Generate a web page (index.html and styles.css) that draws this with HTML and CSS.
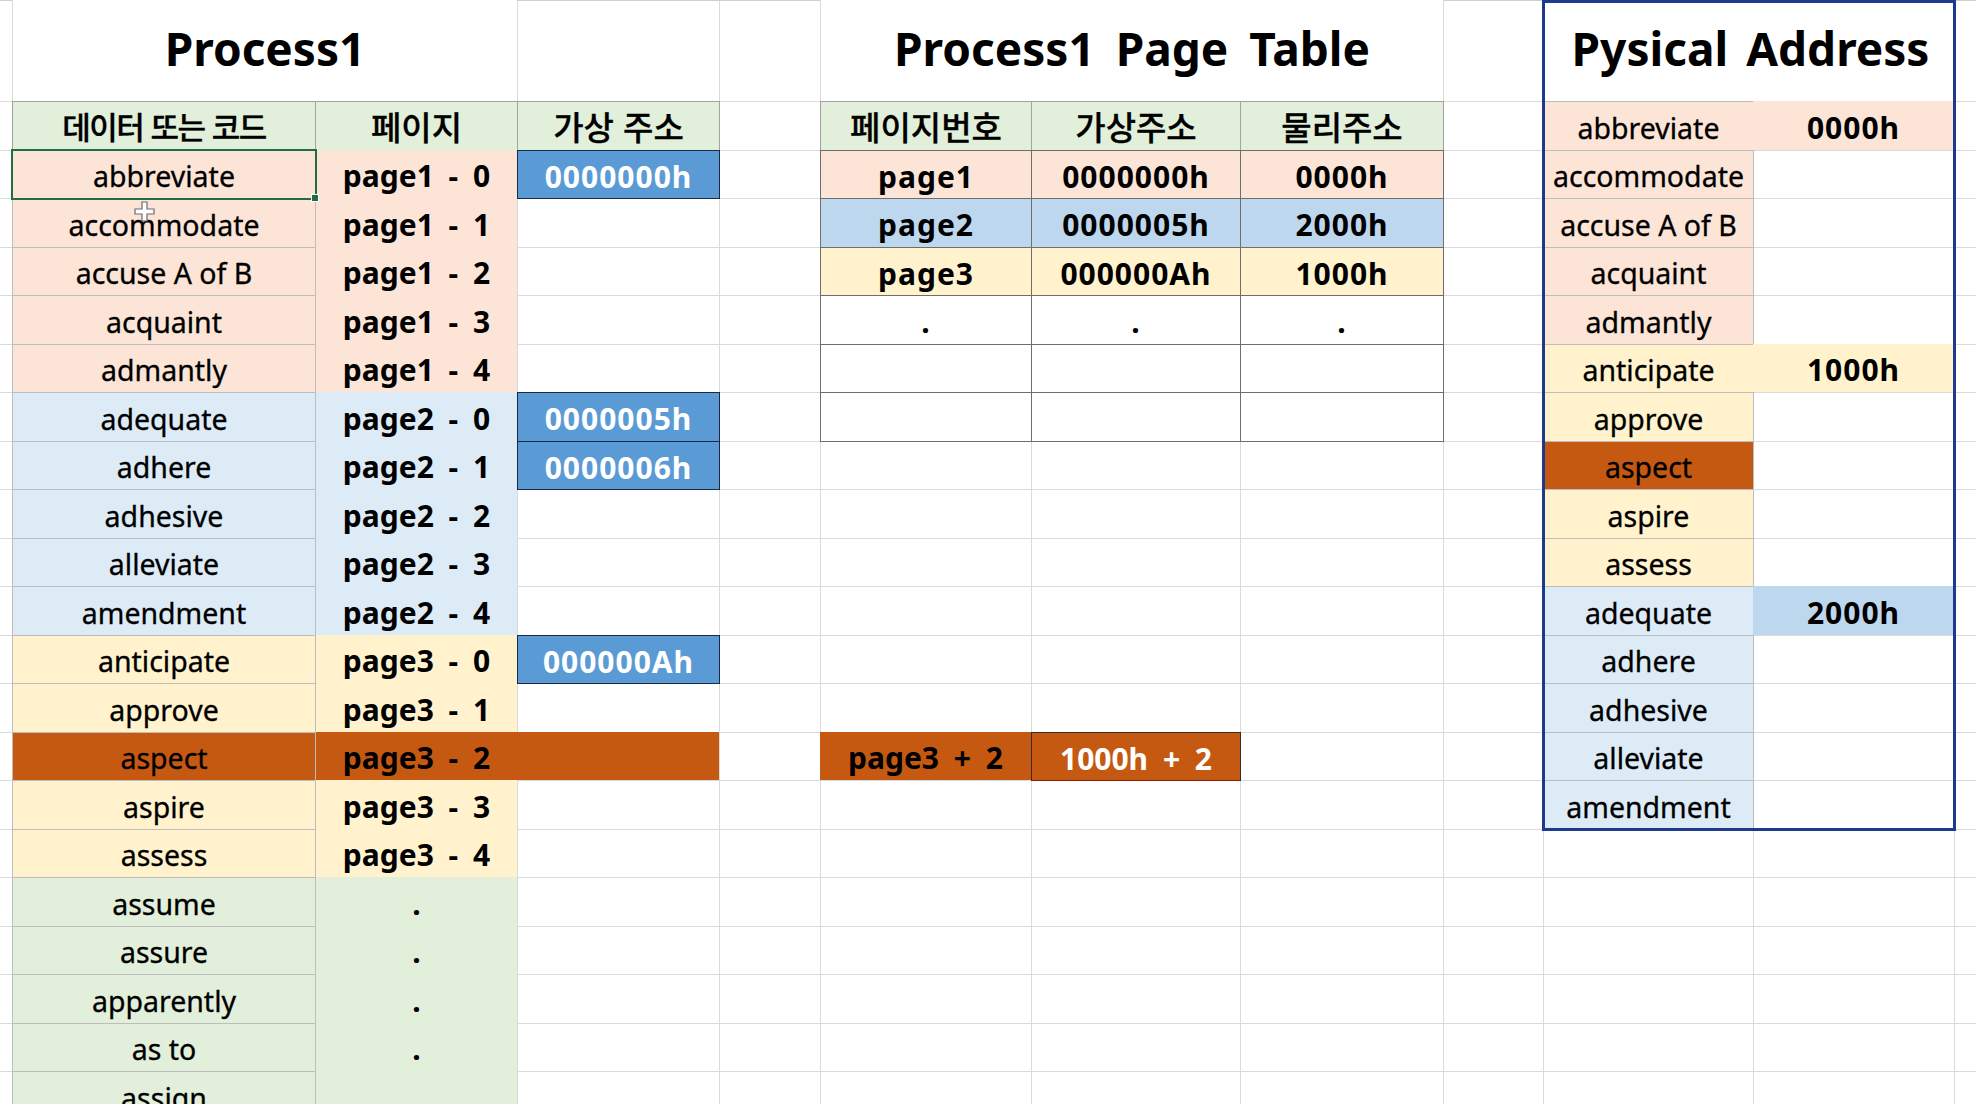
FILE: index.html
```html
<!DOCTYPE html>
<html lang="ko">
<head>
  <meta charset="UTF-8">
  <title>Process1 Page Table</title>
  <link rel="stylesheet" href="styles.css">
</head>
<body>
  <div class="sheet">
    <div class="title t-proc">Process1</div>
    <div class="title t-table">Process1 Page Table</div>

    <!-- Process1 : data / page / virtual address -->
    <div class="block proc">
      <div class="hd hd-tight">데이터 또는 코드</div><div class="hd">페이지</div><div class="hd">가상 주소</div>

      <div class="word peach sel">abbreviate</div><div class="pg peach">page1 - 0</div><div class="va">0000000h</div>
      <div class="word peach has-cursor">accommodate
        <svg class="cursor" viewBox="0 0 21 21"><path d="M8 1h5v7h7v5h-7v7H8v-7H1V8h7z" fill="#fff" stroke="#6b6b6b" stroke-width="1.2"/></svg>
      </div><div class="pg peach">page1 - 1</div><span></span>
      <div class="word peach">accuse A of B</div><div class="pg peach">page1 - 2</div><span></span>
      <div class="word peach">acquaint</div><div class="pg peach">page1 - 3</div><span></span>
      <div class="word peach">admantly</div><div class="pg peach">page1 - 4</div><span></span>

      <div class="word sky">adequate</div><div class="pg sky">page2 - 0</div><div class="va">0000005h</div>
      <div class="word sky">adhere</div><div class="pg sky">page2 - 1</div><div class="va">0000006h</div>
      <div class="word sky">adhesive</div><div class="pg sky">page2 - 2</div><span></span>
      <div class="word sky">alleviate</div><div class="pg sky">page2 - 3</div><span></span>
      <div class="word sky">amendment</div><div class="pg sky">page2 - 4</div><span></span>

      <div class="word cream">anticipate</div><div class="pg cream">page3 - 0</div><div class="va">000000Ah</div>
      <div class="word cream">approve</div><div class="pg cream">page3 - 1</div><span></span>
      <div class="word rust">aspect</div><div class="pg rust">page3 - 2</div><div class="rust"></div>
      <div class="word cream">aspire</div><div class="pg cream">page3 - 3</div><span></span>
      <div class="word cream">assess</div><div class="pg cream">page3 - 4</div><span></span>

      <div class="word mint">assume</div><div class="pg mint">.</div><span></span>
      <div class="word mint">assure</div><div class="pg mint">.</div><span></span>
      <div class="word mint">apparently</div><div class="pg mint">.</div><span></span>
      <div class="word mint">as to</div><div class="pg mint">.</div><span></span>
      <div class="word mint">assign</div><div class="pg mint">.</div><span></span>
    </div>

    <!-- page table -->
    <div class="block ptable">
      <div class="hd">페이지번호</div><div class="hd">가상주소</div><div class="hd">물리주소</div>
      <div class="pt peach">page1</div><div class="pt peach">0000000h</div><div class="pt peach">0000h</div>
      <div class="pt blue2">page2</div><div class="pt blue2">0000005h</div><div class="pt blue2">2000h</div>
      <div class="pt cream">page3</div><div class="pt cream">000000Ah</div><div class="pt cream">1000h</div>
      <div class="pt">.</div><div class="pt">.</div><div class="pt">.</div>
      <div class="pt"></div><div class="pt"></div><div class="pt"></div>
      <div class="pt"></div><div class="pt"></div><div class="pt"></div>
    </div>

    <div class="calc calc-page">page3 + 2</div>
    <div class="calc calc-addr">1000h + 2</div>

    <!-- physical memory -->
    <div class="block phys">
      <div class="title t-phys">Pysical Address</div>
      <div class="word peach">abbreviate</div><div class="val peach">0000h</div>
      <div class="word peach">accommodate</div><span></span>
      <div class="word peach">accuse A of B</div><span></span>
      <div class="word peach">acquaint</div><span></span>
      <div class="word peach">admantly</div><span></span>
      <div class="word cream">anticipate</div><div class="val cream">1000h</div>
      <div class="word cream">approve</div><span></span>
      <div class="word rust">aspect</div><span></span>
      <div class="word cream">aspire</div><span></span>
      <div class="word cream">assess</div><span></span>
      <div class="word sky">adequate</div><div class="val blue2">2000h</div>
      <div class="word sky">adhere</div><span></span>
      <div class="word sky">adhesive</div><span></span>
      <div class="word sky">alleviate</div><span></span>
      <div class="word sky">amendment</div><span></span>
    </div>
  </div>
</body>
</html>
```

FILE: styles.css
```css
body {
  margin: 0;
  height: 1104px;
  overflow: hidden;
  background: #fff;
  font-family: "Noto Sans", "Noto Sans CJK KR", sans-serif;
  color: #000;
}

/* the worksheet: fixed column widths, gridlines drawn in the background */
.sheet {
  --grid: #dadada;
  display: grid;
  grid-template-columns: 12px 303px 202px 202px 101px 211px 209px 203px 100px 210px 201px 1fr;
  grid-template-rows: 101px repeat(21, 48.5px);
  background:
    linear-gradient(#6b9a78, #6b9a78) 12px 0 / 303px 2px no-repeat,
    linear-gradient(#cfcfcf, #cfcfcf) 0 0 / 100% 1px no-repeat,
    linear-gradient(var(--grid), var(--grid)) 12px 0 / 1px 100% no-repeat,
    linear-gradient(var(--grid), var(--grid)) 315px 0 / 1px 100% no-repeat,
    linear-gradient(var(--grid), var(--grid)) 517px 0 / 1px 100% no-repeat,
    linear-gradient(var(--grid), var(--grid)) 719px 0 / 1px 100% no-repeat,
    linear-gradient(var(--grid), var(--grid)) 820px 0 / 1px 100% no-repeat,
    linear-gradient(var(--grid), var(--grid)) 1031px 0 / 1px 100% no-repeat,
    linear-gradient(var(--grid), var(--grid)) 1240px 0 / 1px 100% no-repeat,
    linear-gradient(var(--grid), var(--grid)) 1443px 0 / 1px 100% no-repeat,
    linear-gradient(var(--grid), var(--grid)) 1543px 0 / 1px 100% no-repeat,
    linear-gradient(var(--grid), var(--grid)) 1753px 0 / 1px 100% no-repeat,
    linear-gradient(var(--grid), var(--grid)) 1954px 0 / 1px 100% no-repeat,
    linear-gradient(#fff, #fff) 0 0 / 100% 101px no-repeat,
    repeating-linear-gradient(var(--grid) 0 1px, transparent 1px 48.5px) 0 101px / 100% 100% no-repeat,
    #fff;
}

/* blocks of cells */
.block {
  display: grid;
  grid-auto-rows: 48.5px;
}

.proc {
  grid-column: 2 / 5;
  grid-row: 2 / 23;
  grid-template-columns: 303px 202px 202px;
}

.ptable {
  grid-column: 6 / 9;
  grid-row: 2 / 9;
  grid-template-columns: 211px 209px 203px;
}

.phys {
  grid-column: 10 / 12;
  grid-row: 1 / 17;
  grid-template-columns: 210px 201px;
  grid-template-rows: 101px repeat(15, 48.5px);
  position: relative;
}

.phys::after {
  content: "";
  position: absolute;
  inset: 0 -2px -2px -1px;
  border: 3px solid #1d3a8c;
  pointer-events: none;
}

.block > *,
.title,
.calc {
  display: flex;
  align-items: center;
  justify-content: center;
  white-space: nowrap;
  box-sizing: border-box;
  padding-top: 4px;
}

.title {
  font-size: 46px;
  font-weight: 700;
  word-spacing: 9px;
  background: #fff;
  border-left: 1px solid var(--grid);
  padding: 0 0 5px;
}

.t-proc { grid-column: 2 / 4; grid-row: 1; }
.t-table { grid-column: 6 / 9; grid-row: 1; }
.t-phys { grid-column: 1 / 3; border-left: 0; padding-left: 4px; word-spacing: 6px; }

/* cells */
.hd {
  background: #e2efda;
  border: 1px solid #a3a3a3;
  margin: 0 -1px -1px 0;
  font-family: "Noto Sans CJK KR", sans-serif;
  font-size: 33px;
  font-weight: 500;
  -webkit-text-stroke: 0.3px #000;
  padding-top: 0;
}

.hd-tight {
  font-size: 31px;
  letter-spacing: -1.5px;
}

.word {
  font-size: 28.5px;
  -webkit-text-stroke: 0.3px #000;
  border: 1px solid #bdbdbd;
  margin: 0 -1px -1px 0;
}

.pg {
  font-size: 30px;
  font-weight: 700;
  word-spacing: 7px;
  border-left: 1px solid #bdbdbd;
}

.va {
  background: #5b9bd5;
  color: #fff;
  font-size: 30px;
  font-weight: 700;
  letter-spacing: 1px;
  border: 1px solid #1b2a44;
  margin: 0 -1px -1px 0;
}

.pt {
  font-size: 30px;
  font-weight: 700;
  letter-spacing: 1px;
  border: 1px solid #6e6e6e;
  margin: 0 -1px -1px 0;
}

.val {
  font-size: 30px;
  font-weight: 700;
  letter-spacing: 1px;
}

.calc {
  grid-row: 15;
  font-size: 30px;
  font-weight: 700;
  word-spacing: 7px;
  background: #c65911;
}

.calc-page { grid-column: 6; }

.calc-addr {
  grid-column: 7;
  color: #fff;
  border: 1px solid #3b2a22;
  border-bottom-color: #8a1c0c;
  margin: 0 -1px -1px 0;
}

/* fills */
.peach { background: #fce4d6; }
.sky { background: #ddebf7; }
.blue2 { background: #bdd7ee; }
.cream { background: #fff2cc; }
.mint { background: #e2efda; }
.rust { background: #c65911; }

/* active cell and mouse pointer */
.sel {
  position: relative;
  outline: 2px solid #1f6e43;
  outline-offset: -1px;
  z-index: 1;
}

.sel::after {
  content: "";
  position: absolute;
  right: -4px;
  bottom: -4px;
  width: 6px;
  height: 6px;
  background: #1f6e43;
  border: 1px solid #fff;
}

.has-cursor { position: relative; }

.cursor {
  position: absolute;
  left: 121px;
  top: 2px;
  width: 21px;
  height: 21px;
  z-index: 2;
}
```
